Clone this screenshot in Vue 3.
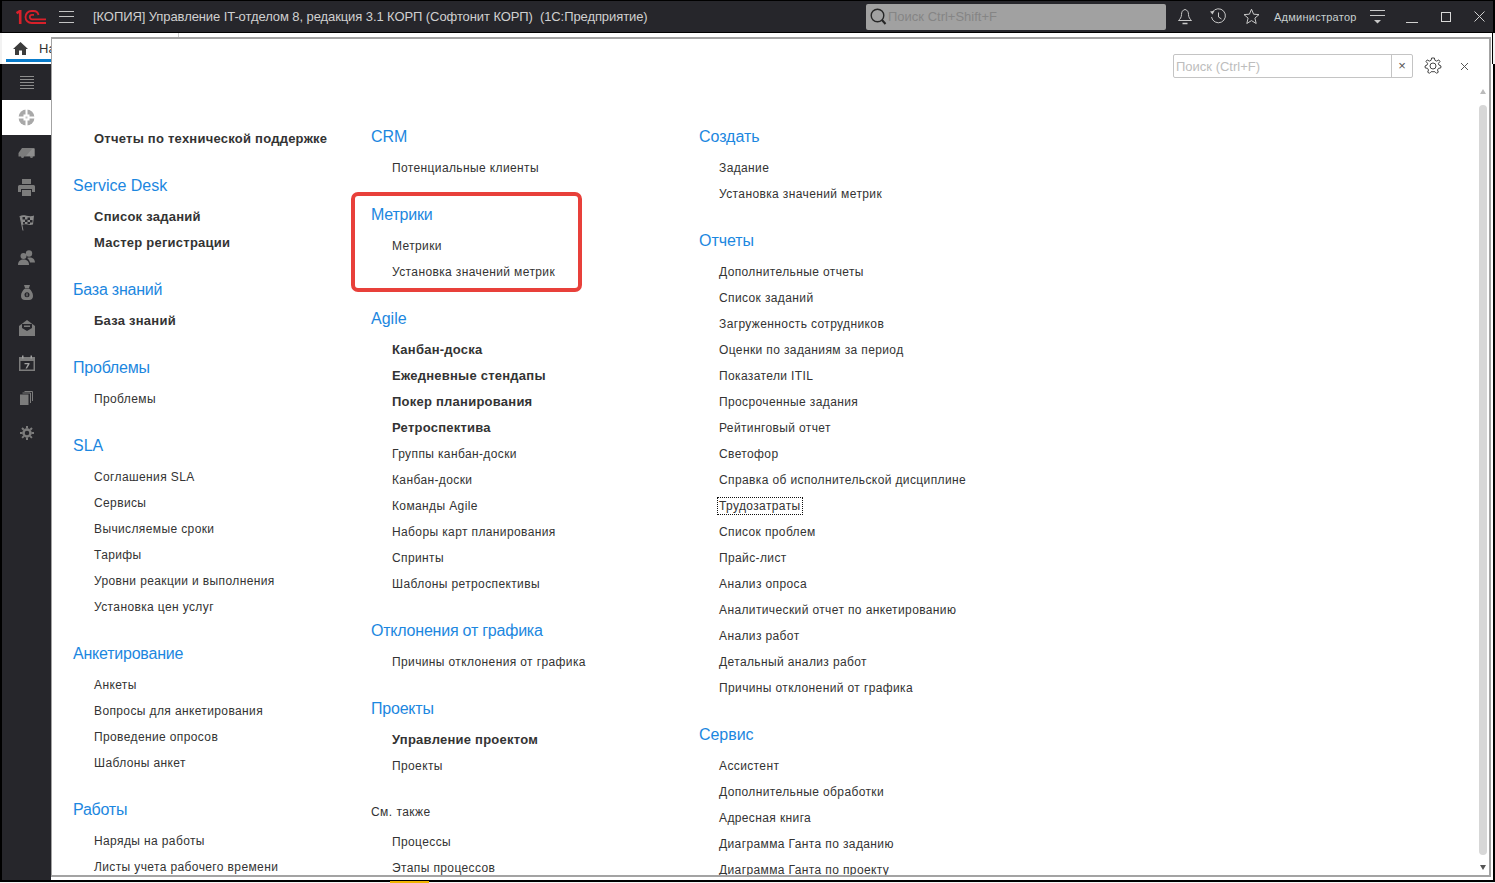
<script setup>
const winTitle = '[КОПИЯ] Управление IT-отделом 8, редакция 3.1 КОРП (Софтонит КОРП)  (1С:Предприятие)'
const isCyr = s => /[А-Яа-я]/.test(s)
const columns = [
  { cls: 'col-a', groups: [
    { items: [{ t: 'Отчеты по технической поддержке', b: true }] },
    { title: 'Service Desk', items: [{ t: 'Список заданий', b: true }, { t: 'Мастер регистрации', b: true }] },
    { title: 'База знаний', items: [{ t: 'База знаний', b: true }] },
    { title: 'Проблемы', items: [{ t: 'Проблемы' }] },
    { title: 'SLA', items: ['Соглашения SLA', 'Сервисы', 'Вычисляемые сроки', 'Тарифы', 'Уровни реакции и выполнения', 'Установка цен услуг'].map(t => ({ t })) },
    { title: 'Анкетирование', items: ['Анкеты', 'Вопросы для анкетирования', 'Проведение опросов', 'Шаблоны анкет'].map(t => ({ t })) },
    { title: 'Работы', items: ['Наряды на работы', 'Листы учета рабочего времени'].map(t => ({ t })) },
  ] },
  { cls: 'col-b', groups: [
    { title: 'CRM', items: [{ t: 'Потенциальные клиенты' }] },
    { title: 'Метрики', items: [{ t: 'Метрики' }, { t: 'Установка значений метрик' }] },
    { title: 'Agile', items: [
      { t: 'Канбан-доска', b: true }, { t: 'Ежедневные стендапы', b: true }, { t: 'Покер планирования', b: true }, { t: 'Ретроспектива', b: true },
      { t: 'Группы канбан-доски' }, { t: 'Канбан-доски' }, { t: 'Команды Agile' }, { t: 'Наборы карт планирования' }, { t: 'Спринты' }, { t: 'Шаблоны ретроспективы' },
    ] },
    { title: 'Отклонения от графика', items: [{ t: 'Причины отклонения от графика' }] },
    { title: 'Проекты', items: [{ t: 'Управление проектом', b: true }, { t: 'Проекты' }] },
    { see: 'См. также', items: [{ t: 'Процессы' }, { t: 'Этапы процессов' }] },
  ] },
  { cls: 'col-c', groups: [
    { title: 'Создать', items: [{ t: 'Задание' }, { t: 'Установка значений метрик' }] },
    { title: 'Отчеты', items: [
      { t: 'Дополнительные отчеты' }, { t: 'Список заданий' }, { t: 'Загруженность сотрудников' }, { t: 'Оценки по заданиям за период' }, { t: 'Показатели ITIL' },
      { t: 'Просроченные задания' }, { t: 'Рейтинговый отчет' }, { t: 'Светофор' }, { t: 'Справка об исполнительской дисциплине' }, { t: 'Трудозатраты', focus: true },
      { t: 'Список проблем' }, { t: 'Прайс-лист' }, { t: 'Анализ опроса' }, { t: 'Аналитический отчет по анкетированию' }, { t: 'Анализ работ' }, { t: 'Детальный анализ работ' }, { t: 'Причины отклонений от графика' },
    ] },
    { title: 'Сервис', items: ['Ассистент', 'Дополнительные обработки', 'Адресная книга', 'Диаграмма Ганта по заданию', 'Диаграмма Ганта по проекту'].map(t => ({ t })) },
  ] },
]
</script>

<template>
  <div class="app">
    <header class="topbar">
      <svg class="logo" width="30" height="14" viewBox="0 0 30 14" fill="none" stroke="#d8202a" stroke-width="1.800">
        <path d="M.5 3.200 L4.200 1 V14" stroke-width="2.600" />
        <path d="M30 13 H15.500 A5.800 5.800 0 0 1 15.500 1 H17.500 A5 5 0 0 1 22.500 5" />
        <path d="M30 9.300 H16 A2.200 2.200 0 0 1 16 4.800 H18" />
      </svg>
      <svg class="burger" width="15" height="12" viewBox="0 0 15 12" stroke="#c4c4c4"><path d="M0 .5H15M0 5.500H15M0 11.500H15" /></svg>
      <div class="win-title">{{ winTitle }}</div>
      <div class="global-search">
        <svg width="18" height="19" viewBox="0 0 18 19" fill="none" stroke="#262626" stroke-width="1.400"><circle cx="8.500" cy="8.500" r="6.300" /><path d="M13 13 L16.500 17" stroke-width="2" /></svg>
        <span>Поиск Ctrl+Shift+F</span>
      </div>
      <div class="top-icons">
        <svg width="16" height="17" viewBox="0 0 16 17" fill="none" stroke="#c8c8c8"><path d="M8 1.500 C5.500 2 4.500 4 4.500 6.500 C4.500 9.500 3 11 1.500 12.500 H14.500 C13 11 11.500 9.500 11.500 6.500 C11.500 4 10.500 2 8 1.500Z" /><path d="M5.500 15.500 H10.500" stroke-width="1.500" /></svg>
        <svg width="18" height="17" viewBox="0 0 18 17" fill="none" stroke="#c8c8c8"><path d="M3.500 4 A7 7 0 1 1 2.500 9" /><path d="M1 3.500 L3.500 6.500 L5.500 2.800" fill="#c8c8c8" stroke="none" /><path d="M9.500 4.500 V9 L12.500 11" /></svg>
        <svg width="17" height="17" viewBox="0 0 17 17" fill="none" stroke="#c8c8c8"><path d="M8.500 1.200 L10.600 6.200 L16 6.600 L11.900 10.100 L13.200 15.500 L8.500 12.600 L3.800 15.500 L5.100 10.100 L1 6.600 L6.400 6.200 Z" /></svg>
        <span class="user">Администратор</span>
        <svg width="15" height="14" viewBox="0 0 15 14" stroke="#c8c8c8"><path d="M0 .5H15M0 5.500H15" /><path d="M4 10H11L7.500 13.500Z" fill="#c8c8c8" stroke="none" /></svg>
        <svg class="win-min" width="12" height="10" viewBox="0 0 12 10" stroke="#d0d0d0"><path d="M0 9.500H12" /></svg>
        <svg class="win-max" width="10" height="10" viewBox="0 0 10 10" fill="none" stroke="#d8d8d8"><rect x=".5" y=".5" width="9" height="9" /></svg>
        <svg class="win-close" width="11" height="11" viewBox="0 0 11 11" stroke="#d0d0d0"><path d="M.5.500L10.500 10.500M10.500.500L.5 10.500" /></svg>
      </div>
    </header>

    <div class="tabstrip">
      <div class="home-tab">
        <svg width="15" height="13" viewBox="0 0 15 13" fill="#3c3c3c"><path d="M7.500 0 L15 7 H13 V13 H9 V8.500 H6 V13 H2 V7 H0 Z" /></svg>
        <span>Начальная страница</span>
      </div>
    </div>

    <div class="body">
      <nav class="rail">
        <div class="rail-item">
          <svg width="16" height="14" viewBox="0 0 16 14" stroke="#8d8d8d"><path d="M1 1.500H15M1 4.500H15M1 7.500H15M1 10.500H15M1 13.500H15" /></svg>
        </div>
        <div class="rail-item active">
          <svg width="17" height="17" viewBox="0 0 17 17"><circle cx="8.500" cy="8.500" r="8" fill="#a8a8a8" /><path d="M8.500 0V17M0 8.500H17" stroke="#fff" stroke-width="2" /><rect x="5.500" y="5.500" width="6" height="6" fill="#fff" /><rect x="7.500" y="7.500" width="2" height="2" fill="#c8c8c8" /></svg>
        </div>
        <div class="rail-item">
          <svg width="17" height="12" viewBox="0 0 17 12"><path d="M4 1 H16.500 V9.500 H15 A1.500 1.500 0 0 1 12 9.500 H6 A1.500 1.500 0 0 1 3 9.500 H.5 V6 Z" fill="#7c7c7c" /><path d="M8 9 L14 2 H16.500 V9Z" fill="#8e8e8e" /></svg>
        </div>
        <div class="rail-item">
          <svg width="17" height="17" viewBox="0 0 17 17" fill="#7c7c7c"><path d="M4 0H13V5H4Z" /><path d="M1.500 6H15.500A1.500 1.500 0 0 1 17 7.500V13H14V10H3V13H0V7.500A1.500 1.500 0 0 1 1.500 6Z" /><path d="M4 11H13V17H4Z" /></svg>
        </div>
        <div class="rail-item">
          <svg width="16" height="17" viewBox="0 0 16 17"><path d="M1 2 C5 0 10 3.500 15 1.500 L14 10.500 C10 12 6 9 3 11 L1 2Z" fill="#8a8a8a" /><path d="M3.500 3h2.500v2.500H3.500zM8.500 3.500h2.500v2.500H8.500zM6 5.500h2.500v2.500H6zM11 6h2.500v2.500H11zM4 8h2v1.800H4zM8.500 8h2.500v2H8.500z" fill="#26262b" /><path d="M1 2 L4 16.500" stroke="#8a8a8a" fill="none" /></svg>
        </div>
        <div class="rail-item">
          <svg width="17" height="15" viewBox="0 0 17 15" fill="#7c7c7c"><circle cx="11" cy="3.500" r="3.200" /><circle cx="5.500" cy="6" r="3" /><path d="M0 15 C0 11 2.500 9.500 5.500 9.500 C8.500 9.500 11 11 11 15Z" /><path d="M9 8 C13 6.500 17 8.500 17 12.500 H12 C11.500 10.500 10.500 9 9 8Z" /></svg>
        </div>
        <div class="rail-item">
          <svg width="12" height="15" viewBox="0 0 12 15"><path d="M3 0H9L8 3H4Z M4 3.500 H8 C10.500 5.500 12 8 12 11 C12 13.500 10.500 15 8 15H4C1.500 15 0 13.500 0 11C0 8 1.500 5.500 4 3.500Z" fill="#7c7c7c" /><circle cx="6" cy="9.800" r="2.500" fill="#26262b" /><path d="M6 8.300V11.300" stroke="#8a8a8a" /></svg>
        </div>
        <div class="rail-item">
          <svg width="16" height="16" viewBox="0 0 16 16"><path d="M8 0 L16 6 V16 H0 V6Z" fill="#7c7c7c" /><path d="M3 4H13V8L8 11L3 8Z" fill="#26262b" /><path d="M5 5.500H11V7H5Z" fill="#7c7c7c" /></svg>
        </div>
        <div class="rail-item">
          <svg width="16" height="16" viewBox="0 0 16 16"><path d="M0 2H16V16H0Z" fill="#7c7c7c" /><path d="M1.500 6H14.500V14.500H1.500Z" fill="#26262b" /><path d="M3 .5H4.500V3.500H3ZM11.500 .5H13V3.500H11.500Z" fill="#a0a0a0" /><path d="M5.500 8H10.500V9.200L8 13.500H6.500L8.800 9.300H5.500Z" fill="#a0a0a0" /></svg>
        </div>
        <div class="rail-item">
          <svg width="13" height="14" viewBox="0 0 13 14"><path d="M0 3.500H8.500V14H0Z" fill="#7c7c7c" /><path d="M2.500 2H10.500V12M4.500 .5H12.500V10" fill="none" stroke="#7c7c7c" /></svg>
        </div>
        <div class="rail-item">
          <svg width="14" height="14" viewBox="0 0 14 14" fill="none"><circle cx="7" cy="7" r="3.500" stroke="#7c7c7c" stroke-width="2.500" /><path d="M7 0V14M0 7H14M2 2L12 12M12 2L2 12" stroke="#7c7c7c" stroke-width="2" stroke-dasharray="2.500 9 2.500" /></svg>
        </div>
      </nav>
    </div>

    <section class="panel">
      <div class="panel-tools">
        <div class="find">
          <span class="find-text">Поиск (Ctrl+F)</span>
          <span class="find-clear">×</span>
        </div>
        <svg class="gear" width="18" height="18" viewBox="0 0 18 18" fill="none" stroke="#444"><circle cx="9" cy="9" r="3" /><path d="M7.600 1 H10.400 L10.900 3.300 L12.700 4.100 L14.800 2.900 L16 4.600 L14.400 6.300 L14.900 8 L17 9 L16.700 11 L14.500 11.300 L13.500 13 L14.300 15.200 L12.500 16.300 L10.900 14.700 H7.100 L5.500 16.300 L3.700 15.200 L4.500 13 L3.500 11.300 L1.300 11 L1 9 L3.100 8 L3.600 6.300 L2 4.600 L3.200 2.900 L5.300 4.100 L7.100 3.300 Z" /></svg>
        <svg class="close" width="9" height="9" viewBox="0 0 9 9" stroke="#555"><path d="M1 1L8 8M8 1L1 8" /></svg>
      </div>

      <div class="columns">
        <div v-for="col in columns" :key="col.cls" class="column" :class="col.cls">
          <div v-for="(g, i) in col.groups" :key="i" class="group">
            <h3 v-if="g.title" class="group-title" :class="{ cyr: isCyr(g.title) }">{{ g.title }}</h3>
            <div v-if="g.see" class="see-also">{{ g.see }}</div>
            <div
              v-for="it in g.items"
              :key="it.t"
              class="item"
              :class="{ bold: it.b }"
            ><span :class="{ focus: it.focus }">{{ it.t }}</span></div>
          </div>
        </div>
      </div>

      <div class="highlight"></div>

      <div class="scrollbar">
        <i class="arrow up"></i>
        <div class="thumb"></div>
        <i class="arrow down"></i>
      </div>
    </section>

    <div class="foot-mark"></div>
  </div>
</template>

<style>
html, body { margin: 0; padding: 0; background: #f2f2f2; overflow: hidden; }
</style>

<style scoped>
.app {
  position: relative;
  width: 1495px;
  height: 883px;
  box-sizing: border-box;
  overflow: hidden;
  background: #f2f2f2;
  font-family: "Liberation Sans", Arial, sans-serif;
  color: #333;
}
.topbar {
  box-sizing: border-box;
  height: 33px;
  display: flex;
  align-items: center;
  background: #26262b;
  border: 1px solid #000;
  border-left-width: 2px;
  border-right-width: 2px;
  padding-left: 14px;
  color: #d6d6d6;
}
.logo { flex: none; }
.burger { flex: none; margin-left: 13px; }
.win-title {
  flex: none;
  width: 773px;
  margin-left: 19px;
  font-size: 13px;
  letter-spacing: -.085px;
  white-space: pre;
  color: #d0d0d0;
}
.global-search {
  flex: none;
  box-sizing: border-box;
  width: 300px;
  height: 26px;
  display: flex;
  align-items: center;
  gap: 1px;
  padding-left: 3px;
  background: #a1a1a1;
  border-radius: 2px;
  font-size: 13px;
  color: #858585;
}
.top-icons { display: flex; align-items: center; margin-left: 11px; }
.top-icons svg { flex: none; }
.top-icons svg:nth-child(2) { margin-left: 16px; }
.top-icons svg:nth-child(3) { margin-left: 16px; }
.user { margin-left: 14px; font-size: 11px; letter-spacing: .25px; color: #c8d0d0; white-space: nowrap; }
.top-icons svg:nth-child(5) { margin-left: 13px; }
.top-icons .win-min { margin-left: 21px; margin-top: 2px; }
.top-icons .win-max { margin-left: 23px; }
.top-icons .win-close { margin-left: 23px; }

.tabstrip {
  box-sizing: border-box;
  height: 31px;
  margin: 0 2px;
  background: #fff;
  border-right: 1px solid #000;
}
.home-tab {
  box-sizing: border-box;
  width: 173px;
  height: 29px;
  margin-left: 4px;
  display: flex;
  align-items: center;
  gap: 11px;
  padding: 4px 0 0 7px;
  border-bottom: 3px solid #0a7ccb;
  border-right: 1px solid #ccc;
  font-size: 13px;
  color: #333;
  white-space: nowrap;
  overflow: hidden;
}
.home-tab svg { flex: none; }

.body {
  box-sizing: border-box;
  height: 818px;
  background: #fff;
  border-left: 2px solid #000;
  border-right: 2px solid #000;
  border-bottom: 2px solid #000;
}
.rail { width: 49px; height: 100%; background: #26262b; }
.rail-item {
  height: 35px;
  display: flex;
  align-items: center;
  justify-content: center;
}
.rail-item:first-child { height: 36px; }
.rail-item.active { background: #fff; }

.panel {
  position: absolute;
  left: 51px;
  top: 37px;
  width: 1440px;
  height: 840px;
  box-sizing: border-box;
  background: #fff;
  border: 1px solid #a3a3a3;
  border-width: 2px 2px 2px 1px;
  overflow: hidden;
}
.panel-tools {
  display: flex;
  align-items: center;
  height: 24px;
  padding: 15px 0 0 1121px;
}
.find {
  box-sizing: border-box;
  width: 240px;
  height: 24px;
  display: flex;
  align-items: center;
  border: 1px solid #c4c4c4;
  border-radius: 2px;
  font-size: 13px;
  color: #bdbdbd;
}
.find-text { flex: 1; padding-left: 2px; white-space: nowrap; }
.find-clear {
  width: 20px;
  height: 22px;
  line-height: 21px;
  text-align: center;
  border-left: 1px solid #c4c4c4;
  color: #555;
  font-size: 13px;
}
.gear { margin-left: 11px; flex: none; }
.close { margin-left: 18px; flex: none; }

.columns { display: flex; padding: 46px 0 0 21px; }
.column { flex: none; }
.col-a { width: 298px; padding-top: 2px; }
.col-b { width: 327px; }
.group + .group { margin-top: 21px; }
.group-title {
  margin: 0 0 5px;
  height: 26px;
  line-height: 26px;
  font-size: 16px;
  font-weight: 400;
  color: #1c87e0;
  white-space: nowrap;
}
.group-title.cyr { letter-spacing: -.22px; }
.col-c .group-title { margin-left: 1px; letter-spacing: -.05px; }
.see-also {
  height: 26px;
  line-height: 26px;
  margin: -1px 0 4px;
  font-size: 12px;
  letter-spacing: .45px;
  color: #333;
}
.item {
  height: 26px;
  line-height: 26px;
  padding-left: 21px;
  font-size: 12px;
  letter-spacing: .38px;
  color: #333;
  white-space: nowrap;
}
.item.bold { font-weight: 700; letter-spacing: .24px; font-size: 13px; }
.focus { outline: 1px dotted #111; outline-offset: 1px; }

.highlight {
  position: absolute;
  left: 299px;
  top: 153px;
  width: 231px;
  height: 100px;
  box-sizing: border-box;
  border: 4px solid #e8403a;
  border-radius: 7px;
}
.scrollbar {
  position: absolute;
  right: 2px;
  top: 50px;
  width: 9px;
  height: 781px;
  display: flex;
  flex-direction: column;
  align-items: center;
  justify-content: space-between;
}
.thumb { width: 8px; height: 750px; border-radius: 4px; background: #d7d7d7; }
.arrow { width: 0; height: 0; border-left: 3.500px solid transparent; border-right: 3.500px solid transparent; }
.arrow.up { border-bottom: 5px solid #bbb; }
.arrow.down { border-top: 5px solid #555; }
.foot-mark {
  position: absolute;
  left: 390px;
  top: 881px;
  width: 39px;
  height: 2px;
  background: #f0b400;
}
</style>
